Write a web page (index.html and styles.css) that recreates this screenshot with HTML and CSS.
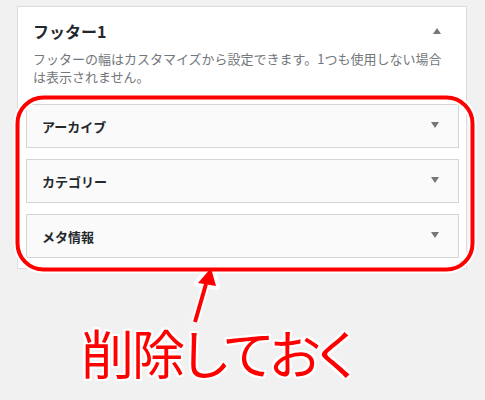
FILE: index.html
```html
<!DOCTYPE html>
<html lang="ja">
<head>
    <meta charset="UTF-8">
    <meta name="viewport" content="width=device-width, initial-scale=1.0">
    <title>フッター1</title>
    <link rel="stylesheet" href="styles.css">
</head>
<body>
    <div class="page">
        <section class="panel">
            <div class="panel-head">
                <h3>フッター1</h3>
                <span class="toggle up"></span>
            </div>
            <p class="desc">フッターの幅はカスタマイズから設定できます。1つも使用しない場合は表示されません。</p>

            <ul class="widgets">
                <li class="widget"><span>アーカイブ</span><span class="toggle down"></span></li>
                <li class="widget"><span>カテゴリー</span><span class="toggle down"></span></li>
                <li class="widget"><span>メタ情報</span><span class="toggle down"></span></li>
            </ul>
        </section>

        <p class="note">削除しておく</p>

        <!-- annotation drawn over the screenshot -->
        <svg class="marker" width="485" height="400" viewBox="0 0 485 400">
            <g fill="none" stroke="#fff" stroke-width="8" stroke-linejoin="round">
                <rect x="17.5" y="97.5" width="455" height="172" rx="26"/>
                <line x1="195" y1="322" x2="206" y2="284"/>
                <polygon points="211,268 198,283 216,286" fill="#fff"/>
            </g>
            <g fill="none" stroke="#f00" stroke-width="4" stroke-linejoin="round">
                <rect x="17.5" y="97.5" width="455" height="172" rx="26"/>
                <line x1="195" y1="322" x2="206" y2="284"/>
            </g>
            <polygon points="211,268 198,283 216,286" fill="#f00"/>
        </svg>
    </div>
</body>
</html>
```

FILE: styles.css
```css
body {
    margin: 0;
    background: #f1f1f1;
    font-family: "Noto Sans CJK JP", "Noto Sans", sans-serif;
    color: #23282d;
}
.page {
    position: relative;
    width: 485px;
    height: 400px;
    padding-top: 6px;
    box-sizing: border-box;
}
.panel {
    width: 450px;
    margin-left: 17px;
    box-sizing: border-box;
    background: white;
    border: 1px solid #dcdcde;
    padding: 12px 7px 10px 8px;
}
.panel-head {
    display: flex;
    align-items: center;
    justify-content: space-between;
    padding: 0 18px 0 7px;
}
.panel-head h3 {
    margin: 0;
    font-size: 16px;
    line-height: 24px;
    font-weight: bold;
}
.desc {
    margin: 7px 0 0 7px;
    width: 420px;
    font-size: 13px;
    line-height: 18px;
    color: #72777c;
}
.widgets {
    list-style: none;
    margin: 18px 0 0;
    padding: 0;
    display: flex;
    flex-direction: column;
    gap: 11px;
}
.widget {
    display: flex;
    align-items: center;
    justify-content: space-between;
    height: 44px;
    box-sizing: border-box;
    padding: 0 19px 0 15px;
    background: #fafafa;
    border: 1px solid #d5d5d5;
    font-size: 13px;
    font-weight: bold;
}
.toggle {
    width: 0;
    height: 0;
    border-left: 4px solid transparent;
    border-right: 4px solid transparent;
}
.toggle.up {
    border-bottom: 6px solid #72777c;
}
.toggle.down {
    border-top: 6px solid #72777c;
    margin-top: -3px;
}
.note {
    margin: 53px 0 0 81px;
    font-size: 53px;
    line-height: 60px;
    letter-spacing: -2px;
    color: #f00;
    font-feature-settings: "palt";
    text-shadow: 2px 0 #fff, -2px 0 #fff, 0 2px #fff, 0 -2px #fff,
        2px 2px #fff, -2px 2px #fff, 2px -2px #fff, -2px -2px #fff;
}
.marker {
    position: absolute;
    left: 0;
    top: 0;
}
```
